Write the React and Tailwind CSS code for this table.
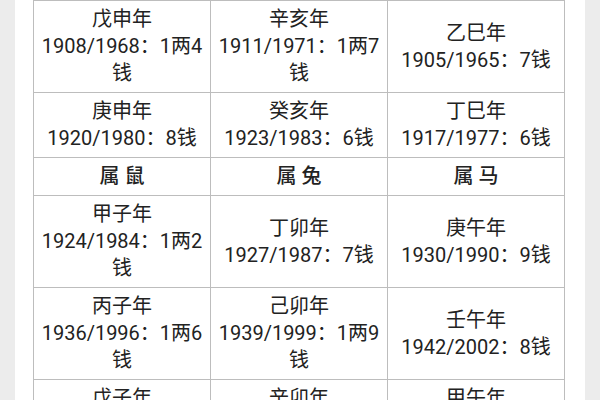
const rows = [
  [
    ["戊申年", "1908/1968：1两4钱"],
    ["辛亥年", "1911/1971：1两7钱"],
    ["乙巳年", "1905/1965：7钱"],
  ],
  [
    ["庚申年", "1920/1980：8钱"],
    ["癸亥年", "1923/1983：6钱"],
    ["丁巳年", "1917/1977：6钱"],
  ],
  { header: ["属 鼠", "属 兔", "属 马"] },
  [
    ["甲子年", "1924/1984：1两2钱"],
    ["丁卯年", "1927/1987：7钱"],
    ["庚午年", "1930/1990：9钱"],
  ],
  [
    ["丙子年", "1936/1996：1两6钱"],
    ["己卯年", "1939/1999：1两9钱"],
    ["壬午年", "1942/2002：8钱"],
  ],
  [
    ["戊子年", "1948/2008：1两5钱"],
    ["辛卯年", "1951/2011：1两2钱"],
    ["甲午年", "1954/2014：1两5钱"],
  ],
];

const App = () => {
  return (
    <div
      className="flex h-[400px] w-[600px] overflow-hidden bg-white text-[#222]"
      style={{ fontFamily: '"Roboto", "Noto Sans CJK SC", sans-serif' }}
    >
      <div className="w-[15px] shrink-0 bg-[#ececec]" />
      <div className="flex-1 pl-[18px] pr-[20px]">
        <table className="w-full table-fixed border-collapse text-[20px] leading-[27px]">
          <tbody>
            {rows.map((row, i) =>
              row.header ? (
                <tr key={i}>
                  {row.header.map((h) => (
                    <td
                      key={h}
                      className="border border-[#bdbdbd] px-1 py-[5px] text-center font-medium"
                    >
                      {h}
                    </td>
                  ))}
                </tr>
              ) : (
                <tr key={i}>
                  {row.map(([name, text]) => (
                    <td
                      key={name}
                      className="border border-[#bdbdbd] px-1 py-[5px] text-center align-middle"
                    >
                      <div>{name}</div>
                      <div>{text}</div>
                    </td>
                  ))}
                </tr>
              )
            )}
          </tbody>
        </table>
      </div>
      <div className="w-[15px] shrink-0 bg-[#ececec]" />
    </div>
  );
};

export default App;
